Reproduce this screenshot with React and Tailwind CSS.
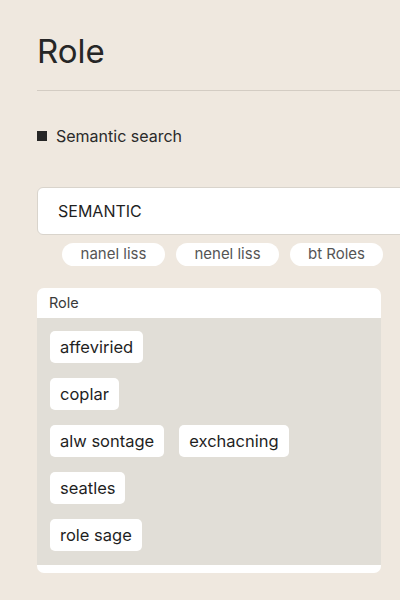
import React from 'react';

const chips = ['nanel liss', 'nenel liss', 'bt Roles'];

const rows = [
  ['affeviried'],
  ['coplar'],
  ['alw sontage', 'exchacning'],
  ['seatles'],
  ['role sage'],
];

const App = () => {
  return (
    <div
      className="w-[400px] h-[600px] overflow-hidden bg-[#efe8df] text-[#222] pl-[37px]"
      style={{ fontFamily: 'Inter, "Liberation Sans", sans-serif' }}
    >
      {/* Title */}
      <h1 className="pt-[32px] text-[33px] leading-[38px] font-normal text-[#262626]">Role</h1>
      <div className="mt-[20px] h-px bg-[#d3ccc3]" />

      {/* Section label */}
      <div className="mt-[35px] flex items-center gap-[9px]">
        <span className="h-[10px] w-[10px] bg-[#262626]" />
        <span className="text-[16px] leading-[20px] text-[#2a2a2a]">Semantic search</span>
      </div>

      {/* Search input */}
      <div className="mt-[41px] -mr-[10px] h-[48px] flex items-center rounded-l-[6px] border border-[#d9d4cc] bg-white pl-[20px]">
        <span className="text-[16px] text-[#1f1f1f]">SEMANTIC</span>
      </div>

      {/* Filter chips */}
      <div className="mt-[8px] ml-[25px] flex gap-[11px]">
        {chips.map((c) => (
          <span
            key={c}
            className="h-[23px] w-[103px] last:w-[93px] flex items-center justify-center rounded-full bg-white text-[15px] text-[#555]"
          >
            {c}
          </span>
        ))}
      </div>

      {/* Role card */}
      <div className="mt-[22px] w-[344px] rounded-[7px] bg-white overflow-hidden">
        <div className="h-[30px] flex items-center px-[12px] text-[14.5px] text-[#3a3a3a]">Role</div>
        <div className="bg-[#e1ded7] px-[13px] pt-[13px] pb-[14px] flex flex-col gap-[15px]">
          {rows.map((row, i) => (
            <div key={i} className="flex gap-[15px]">
              {row.map((t) => (
                <span
                  key={t}
                  className="h-[32px] flex items-center rounded-[5px] bg-white px-[10px] text-[16.5px] text-[#1f1f1f]"
                >
                  {t}
                </span>
              ))}
            </div>
          ))}
        </div>
        <div className="h-[8px]" />
      </div>
    </div>
  );
};

export default App;
